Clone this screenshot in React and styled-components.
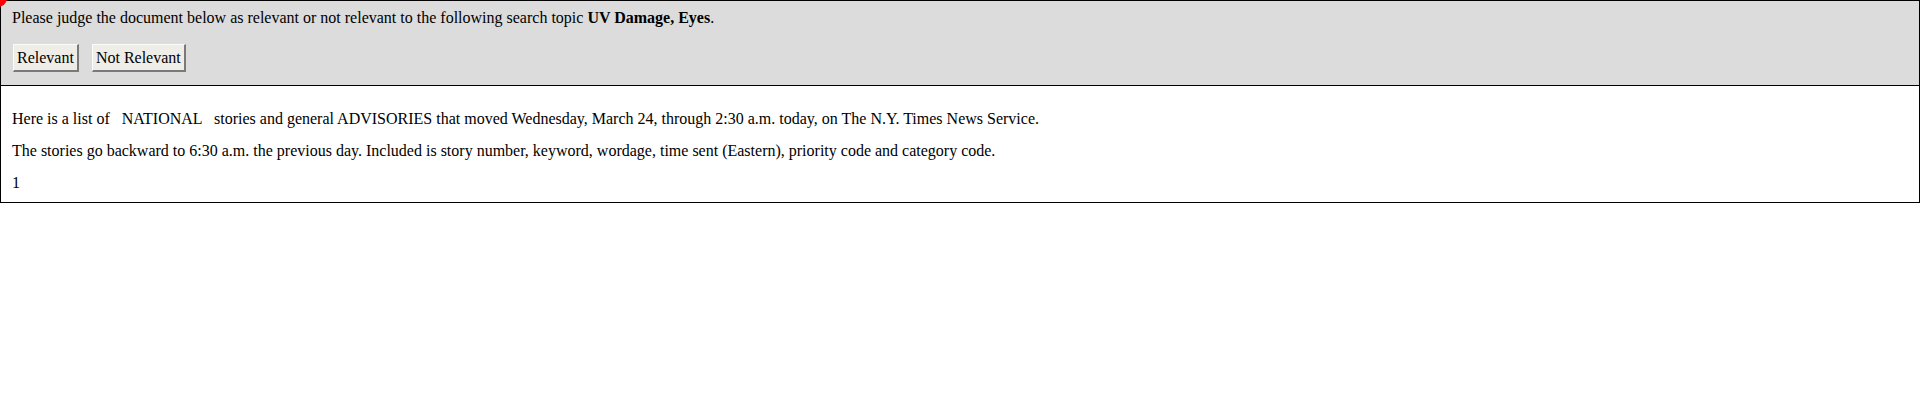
import React from "react";
import styled, { createGlobalStyle } from "styled-components";

const Global = createGlobalStyle`
  html, body { margin: 0; padding: 0; background: #fff; }
  body {
    font-family: "Liberation Serif", "Times New Roman", serif;
    font-size: 16px;
    line-height: 18px;
    color: #000;
  }
  * { box-sizing: border-box; }
`;

const Page = styled.div`
  position: relative;
  width: 1920px;
`;

const Marker = styled.span`
  position: absolute;
  left: -11px;
  top: -11px;
  width: 18px;
  height: 18px;
  border-radius: 50%;
  background: #ff0000;
  z-index: 2;
`;

const Header = styled.div`
  display: flex;
  flex-direction: column;
  gap: 17px;
  background: #dcdcdc;
  border: 1px solid #000;
  border-bottom: none;
  padding: 8px 11px 13px 11px;
`;

const Prompt = styled.div`
  height: 18px;
  white-space: nowrap;
`;

const Actions = styled.div`
  display: flex;
  gap: 13px;
  padding-left: 1px;
`;

const JudgeButton = styled.button`
  height: 28px;
  padding: 0 3px;
  margin: 0;
  font-family: "Liberation Serif", "Times New Roman", serif;
  font-size: 16px;
  line-height: 18px;
  color: #000;
  background: #efede8;
  border-style: solid;
  border-width: 1px 2px 2px 1px;
  border-color: #fbfbfb #7a7a7a #7a7a7a #fbfbfb;
  border-radius: 0;
  cursor: pointer;
`;

const Doc = styled.div`
  display: flex;
  flex-direction: column;
  gap: 14px;
  border: 1px solid #000;
  background: #fff;
  padding: 24px 11px 10px 11px;
`;

const Line = styled.p`
  margin: 0;
  height: 18px;
  white-space: pre;
`;

export default function App() {
  return (
    <>
      <Global />
      <Page>
        <Marker />
        <Header>
          <Prompt>
            Please judge the document below as relevant or not relevant to the following search topic <b>UV Damage, Eyes</b>.
          </Prompt>
          <Actions>
            <JudgeButton type="button">Relevant</JudgeButton>
            <JudgeButton type="button">Not Relevant</JudgeButton>
          </Actions>
        </Header>
        <Doc>
          <Line>{"Here is a list of   NATIONAL   stories and general ADVISORIES that moved Wednesday, March 24, through 2:30 a.m. today, on The N.Y. Times News Service."}</Line>
          <Line>The stories go backward to 6:30 a.m. the previous day. Included is story number, keyword, wordage, time sent (Eastern), priority code and category code.</Line>
          <Line>1</Line>
        </Doc>
      </Page>
    </>
  );
}
